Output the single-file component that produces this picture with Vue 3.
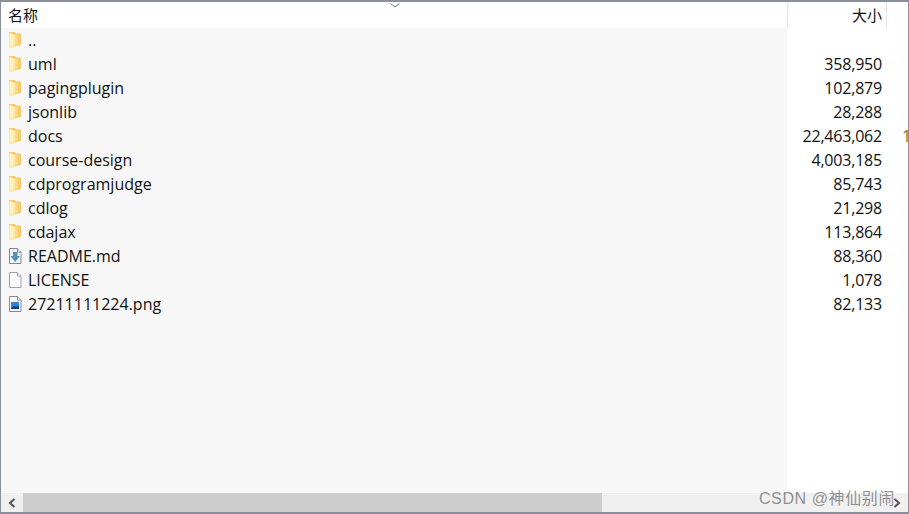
<template>
  <div class="window">
    <div class="header">
      <div class="head-name">名称</div>
      <svg class="sort-arrow" width="10" height="5" viewBox="0 0 10 5"><path d="M0.5 0.5 L5 4 L9.5 0.5" fill="none" stroke="#777" stroke-width="1" /></svg>
      <div class="head-size">大小</div>
      <div class="head-rest"></div>
    </div>

    <div class="body">
      <div class="col-name">
        <div v-for="file in files" :key="file.name" class="name-row">
          <svg v-if="file.type === 'folder'" class="icon" width="14" height="18" viewBox="0 0 14 18">
            <path d="M1 1 H7 L8 2.5 H13 V14 L9 15 H1 Z" fill="#f4cb6c" />
            <path d="M1 1.5 L10 4.5 V14.5 L3 17 L1 15.5 Z" fill="#fad884" />
            <path d="M1 2 L7 4 V15.5 L3 16.5 L1 15 Z" fill="#fde9a9" />
            <path d="M2 3.5 L5 4.5 V13 L2 13.5 Z" fill="#fef1c4" />
          </svg>
          <svg v-else-if="file.type === 'md'" class="icon" width="14" height="18" viewBox="0 0 14 18">
            <path d="M1.5 1.5 H9.5 L13 5 V16.5 H1.5 Z" fill="#f4f5f6" stroke="#83888f" />
            <path d="M9.5 1.5 V5 H13" fill="#fff" stroke="#83888f" />
            <path d="M5 5 H9.5 V9 H12 L7.2 15 L2.5 9 H5 Z" fill="#5293b8" />
          </svg>
          <svg v-else-if="file.type === 'text'" class="icon" width="14" height="18" viewBox="0 0 14 18">
            <path d="M1.5 1.5 H9.5 L13 5 V16.5 H1.5 Z" fill="#fbfbfb" stroke="#a0a4aa" />
            <path d="M9.5 1.5 V5 H13" fill="#fff" stroke="#a0a4aa" />
          </svg>
          <svg v-else class="icon" width="14" height="18" viewBox="0 0 14 18">
            <path d="M1.5 1.5 H9.5 L13 5 V16.5 H1.5 Z" fill="#fbfbfb" stroke="#83888f" />
            <path d="M9.5 1.5 V5 H13" fill="#fff" stroke="#83888f" />
            <rect x="3" y="7" width="8" height="7" fill="#2f86dc" />
            <path d="M3 14 L6 10.5 L8 12 L11 10 V14 Z" fill="#0f3f86" />
          </svg>
          <span>{{ file.name }}</span>
        </div>
      </div>
      <div class="col-size">
        <div v-for="file in files" :key="file.name" class="size-row">{{ file.size }}</div>
      </div>
      <div class="col-rest">
        <div v-for="file in files" :key="file.name" class="rest-row">{{ file.name === 'docs' ? '1' : '' }}</div>
      </div>
    </div>

    <div class="scrollbar">
      <div class="arrow">
        <svg width="8" height="10" viewBox="0 0 8 10"><path d="M6.5 1 L2 5 L6.5 9" fill="none" stroke="#555" stroke-width="2" /></svg>
      </div>
      <div class="track"><div class="thumb"></div></div>
      <div class="arrow">
        <svg width="8" height="10" viewBox="0 0 8 10"><path d="M1.5 1 L6 5 L1.5 9" fill="none" stroke="#555" stroke-width="2" /></svg>
      </div>
    </div>

    <div class="watermark">CSDN @神仙别闹</div>
  </div>
</template>

<script setup>
const files = [
  { name: '..', size: '', type: 'folder' },
  { name: 'uml', size: '358,950', type: 'folder' },
  { name: 'pagingplugin', size: '102,879', type: 'folder' },
  { name: 'jsonlib', size: '28,288', type: 'folder' },
  { name: 'docs', size: '22,463,062', type: 'folder' },
  { name: 'course-design', size: '4,003,185', type: 'folder' },
  { name: 'cdprogramjudge', size: '85,743', type: 'folder' },
  { name: 'cdlog', size: '21,298', type: 'folder' },
  { name: 'cdajax', size: '113,864', type: 'folder' },
  { name: 'README.md', size: '88,360', type: 'md' },
  { name: 'LICENSE', size: '1,078', type: 'text' },
  { name: '27211111224.png', size: '82,133', type: 'image' }
]
</script>

<style>
html, body {
  margin: 0;
  background: #fff;
}
</style>

<style scoped>
.window {
  position: relative;
  box-sizing: border-box;
  width: 909px;
  height: 514px;
  display: flex;
  flex-direction: column;
  overflow: hidden;
  background: #fff;
  border: 1px solid #8b9098;
  border-top-width: 2px;
  border-bottom-width: 2px;
  font-family: "Open Sans", "Noto Sans CJK SC", sans-serif;
  font-size: 16px;
  color: #111;
}

.header {
  position: relative;
  display: flex;
  height: 26px;
  flex: none;
}

.head-name {
  width: 786px;
  flex: none;
  box-sizing: border-box;
  padding-left: 7px;
  line-height: 27px;
  font-size: 15px;
}

.sort-arrow {
  position: absolute;
  left: 389px;
  top: 1px;
}

.head-size {
  width: 100px;
  flex: none;
  box-sizing: border-box;
  border-left: 1px solid #e5e5e5;
  border-right: 1px solid #e5e5e5;
  padding-right: 4px;
  text-align: right;
  line-height: 27px;
  font-size: 15px;
}

.head-rest {
  flex: 1;
}

.body {
  display: flex;
  flex: 1;
  min-height: 0;
}

.col-name {
  width: 786px;
  flex: none;
  background: #f7f7f7;
}

.name-row {
  display: flex;
  align-items: center;
  gap: 6px;
  height: 24px;
  line-height: 24px;
  padding-left: 7px;
}

.icon {
  flex: none;
}

.col-size {
  width: 100px;
  flex: none;
}

.size-row {
  height: 24px;
  line-height: 24px;
  padding-right: 5px;
  text-align: right;
  letter-spacing: -0.2px;
}

.col-rest {
  flex: 1;
  min-width: 0;
  padding-left: 15px;
}

.rest-row {
  height: 24px;
  line-height: 24px;
  width: 6px;
  overflow: hidden;
  color: #a06a10;
}

.scrollbar {
  display: flex;
  height: 19px;
  flex: none;
  background: #f0f0f0;
  border-top: 1px solid #fff;
}

.arrow {
  width: 22px;
  flex: none;
  display: flex;
  align-items: center;
  justify-content: center;
}

.track {
  flex: 1;
}

.thumb {
  width: 579px;
  height: 100%;
  background: #cdcdcd;
}

.watermark {
  position: absolute;
  right: 13px;
  bottom: 3px;
  font-size: 16px;
  letter-spacing: 0.6px;
  color: rgba(110, 110, 110, 0.75);
  font-family: "Liberation Sans", "Noto Sans CJK SC", sans-serif;
}
</style>
